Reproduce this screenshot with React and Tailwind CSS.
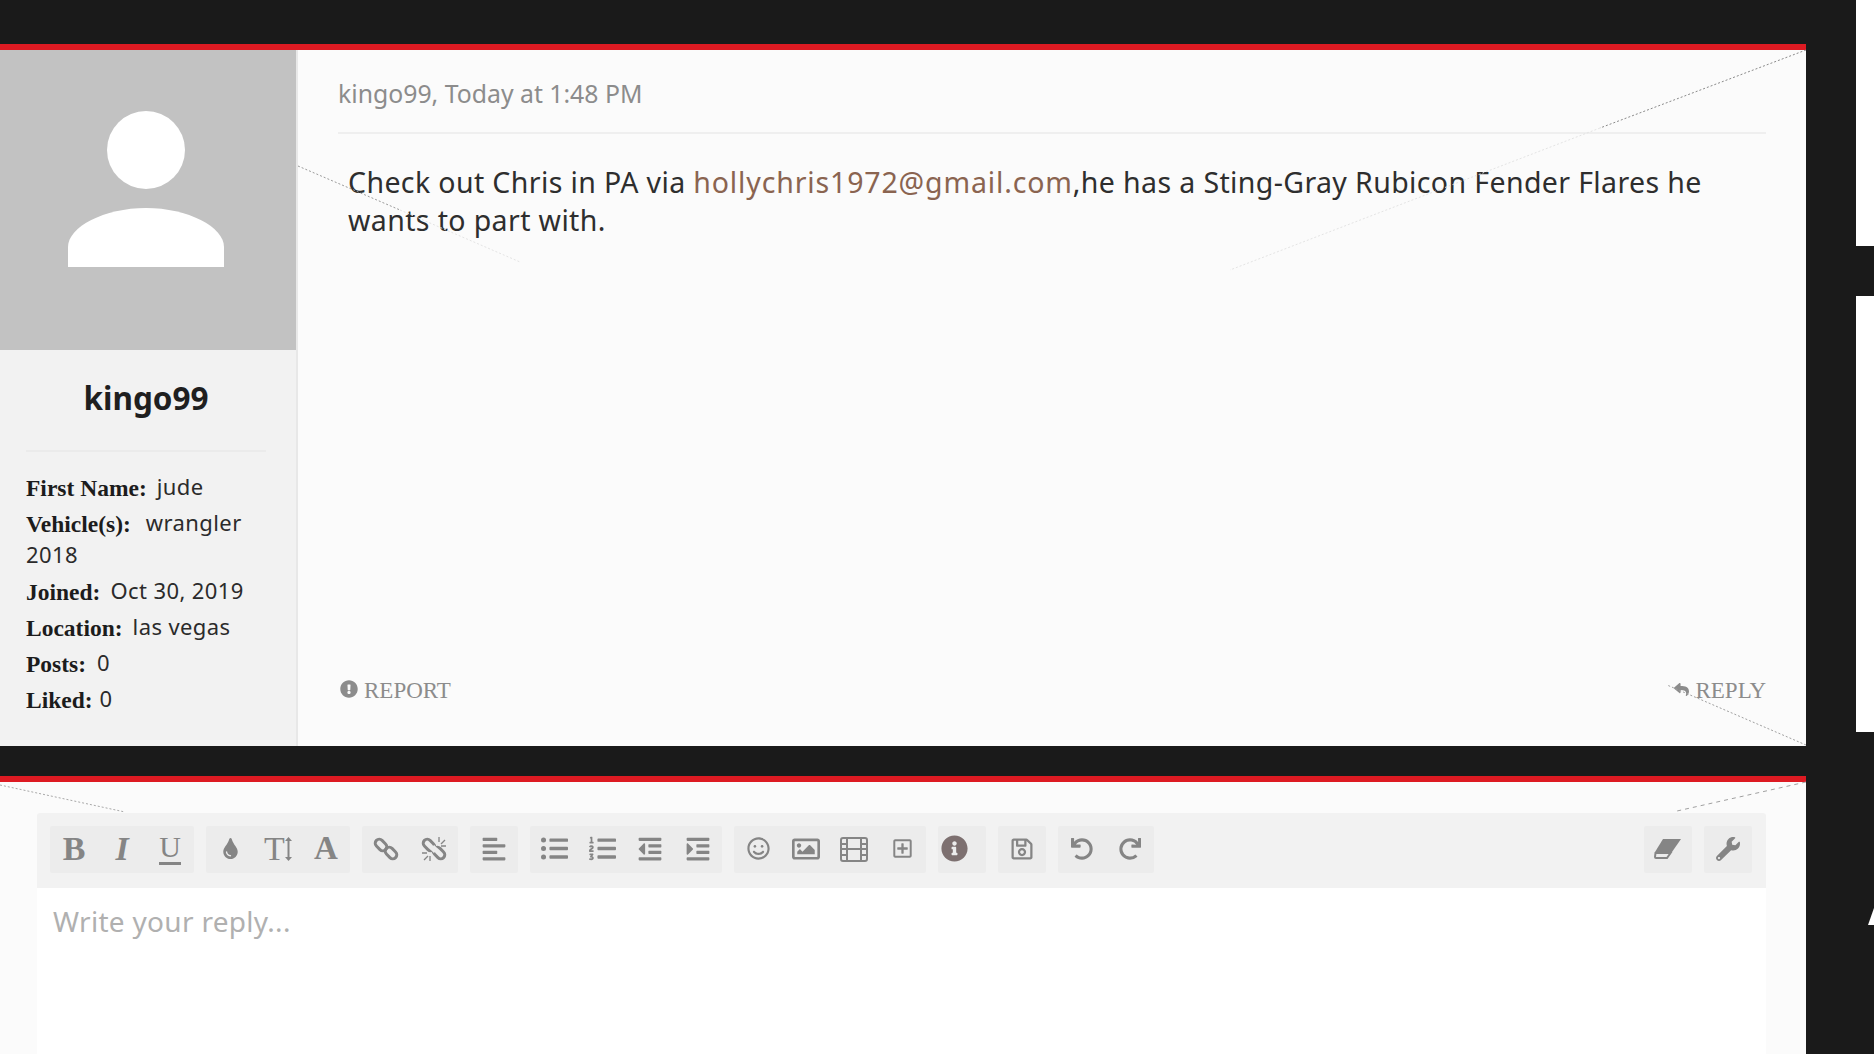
import React from "react";
import { FaTint, FaAlignLeft, FaListUl, FaListOl, FaOutdent, FaIndent, FaRegSmile, FaRegImage, FaRegPlusSquare, FaInfoCircle, FaRegSave, FaUndo, FaRedo, FaWrench, FaReply, FaExclamationCircle } from "react-icons/fa";

const sans = "font-['Noto_Sans','Open_Sans',sans-serif]";
const slab = "font-['Liberation_Serif',serif]";

const Row = ({ label, children, gap = "mr-[10px]" }) => (
  <div className="mb-[4px] text-[22px] leading-[32px] text-[#2b2b2b] tracking-[0.4px]">
    <span className={`${slab} ${gap} align-[-1px] text-[23.5px] leading-none font-bold text-[#1c1c1c] tracking-normal`}>{label}</span>
    {children}
  </div>
);

const Btn = ({ children, className = "" }) => (
  <div className={`flex h-[47px] w-[48px] items-center justify-center pb-[2px] text-[#858585] ${className}`}>{children}</div>
);
const Group = ({ children }) => <div className="flex rounded-[2px] bg-[#ececec]">{children}</div>;
const Glyph = ({ children, className = "" }) => (
  <span className={`${slab} text-[#858585] leading-none ${className}`}>{children}</span>
);

const LinkIcon = ({ broken }) => (
  <svg width="26" height="26" viewBox="0 0 26 26" fill="none" stroke="#858585" strokeWidth="3">
    <rect x="1.500" y="5" width="13" height="8" rx="4" transform="rotate(45 8 9)" />
    <rect x="11.500" y="13" width="13" height="8" rx="4" transform="rotate(45 18 17)" />
    {broken && <path d="M11 11l4 4" stroke="#ececec" strokeWidth="6" />}
    {broken && <path d="M18 1v5M24 4l-4 4M25 10h-5M1 17h5M3 24l4-4M9 20v5" strokeWidth="1.3" />}
  </svg>
);

const Film = () => (
  <svg width="28" height="26" viewBox="0 0 28 26" fill="none" stroke="#858585" strokeWidth="2">
    <rect x="1" y="2" width="26" height="23" rx="2" />
    <path d="M7 2v23M21 2v23M7 13h14M1 8h6M1 13h6M1 19h6M21 8h6M21 13h6M21 19h6" />
  </svg>
);

const Eraser = () => (
  <svg width="28" height="22" viewBox="0 0 28 22">
    <path d="M9 1h18L18 14H1z" fill="#858585" />
    <path d="M1.500 15h15l-3.500 5H2a1 1 0 0 1-1-1z" fill="none" stroke="#858585" strokeWidth="2" />
  </svg>
);

export default function App() {
  return (
    <div className="flex h-[1054px] w-[1874px] overflow-hidden bg-[#1a1a1a]">
      <div className="relative flex w-[1806px] flex-col pt-[44px]">
        {/* post */}
        <div className="flex h-[702px] shrink-0 border-t-[6px] border-[#dd1a22] bg-[#fbfbfb]">
          <aside className="flex w-[298px] shrink-0 flex-col border-r-2 border-[#e8e8e8] bg-[#f2f2f2]">
            <div className="flex h-[300px] items-start bg-[#c2c2c2]">
              <svg width="296" height="300" viewBox="0 0 296 300">
                <ellipse cx="146" cy="100" rx="39" ry="39" fill="#fff" />
                <path d="M68 217v-20c0-20 36-39 78-39s78 19 78 39v20z" fill="#fff" />
              </svg>
            </div>
            <div className={`${sans} pl-[26px] pr-[30px]`}>
              <div className="mt-[24px] border-b-2 border-[#ebebeb] pb-[28px] text-center text-[31.500px] leading-[48px] font-bold text-[#1f1f1f]">kingo99</div>
              <div className="pt-[18px]">
                <Row label="First Name:">jude</Row>
                <Row label="Vehicle(s):" gap="mr-[15px]">wrangler 2018</Row>
                <Row label="Joined:">Oct 30, 2019</Row>
                <Row label="Location:">las vegas</Row>
                <Row label="Posts:" gap="mr-[11px]">0</Row>
                <Row label="Liked:" gap="mr-[7px]">0</Row>
              </div>
            </div>
          </aside>
          <main className="flex flex-1 flex-col px-[40px]">
            <div className={`${sans} h-[84px] border-b-2 border-[#efefef] pt-[24px] text-[24.800px] leading-[38px] text-[#8c8c8c]`}>kingo99, Today at 1:48 PM</div>
            <div className={`${sans} mt-[29px] flex-1 pl-[10px] text-[28.500px] leading-[38px] tracking-[0.38px] text-[#2e2e2e]`}>
              Check out Chris in PA via <span className="tracking-[0.85px] text-[#8a6450]">hollychris1972@gmail.com</span>,he has a Sting-Gray Rubicon Fender Flares he wants to part with.
            </div>
            <div className={`${slab} mb-[40px] flex items-center justify-between text-[23px] leading-[30px] text-[#8c8c8c]`}>
              <div className="flex items-center gap-[6px]"><FaExclamationCircle size={18} color="#8c8c8c" className="-mt-[4px] ml-[2px]" />REPORT</div>
              <div className="flex items-center gap-[6px]"><FaReply size={15} color="#8c8c8c" className="-mt-[4px]" />REPLY</div>
            </div>
          </main>
        </div>

        {/* reply */}
        <div className="mt-[30px] flex-1 border-t-[6px] border-[#dd1a22] bg-[#fbfbfb] pl-[37px] pr-[40px] pt-[31px]">
          <div className="flex h-[75px] items-center justify-between rounded-t-[3px] bg-[#f2f2f2] pl-[13px] pr-[14px]">
            <div className="-mt-[2px] flex gap-[12px]">
              <Group>
                <Btn><Glyph className="text-[34px] font-bold">B</Glyph></Btn>
                <Btn><Glyph className="text-[34px] font-bold italic">I</Glyph></Btn>
                <Btn><Glyph className="border-b-[3px] border-[#858585] text-[30px]">U</Glyph></Btn>
              </Group>
              <Group>
                <Btn><FaTint size={21} /></Btn>
                <Btn>
                  <span className="flex items-center"><Glyph className="text-[34px]">T</Glyph>
                    <svg width="7" height="24" viewBox="0 0 7 24" fill="#858585"><path d="M3.500 0L7 4H4.500v16H7l-3.500 4L0 20h2.500V4H0z" /></svg>
                  </span>
                </Btn>
                <Btn><Glyph className="text-[33px] font-bold">A</Glyph></Btn>
              </Group>
              <Group>
                <Btn><LinkIcon /></Btn>
                <Btn><LinkIcon broken /></Btn>
              </Group>
              <Group><Btn><FaAlignLeft size={26} /></Btn></Group>
              <Group>
                <Btn><FaListUl size={27} /></Btn>
                <Btn><FaListOl size={27} /></Btn>
                <Btn><FaOutdent size={26} /></Btn>
                <Btn><FaIndent size={26} /></Btn>
              </Group>
              <Group>
                <Btn><FaRegSmile size={23} /></Btn>
                <Btn><FaRegImage size={28} /></Btn>
                <Btn><Film /></Btn>
                <Btn><FaRegPlusSquare size={21} /></Btn>
              </Group>
              <Group><Btn className="pr-[16px]"><FaInfoCircle size={27} color="#7d7070" /></Btn></Group>
              <Group><Btn><FaRegSave size={24} /></Btn></Group>
              <Group>
                <Btn><FaUndo size={22} /></Btn>
                <Btn><FaRedo size={22} /></Btn>
              </Group>
            </div>
            <div className="-mt-[2px] flex gap-[12px]">
              <Group><Btn><Eraser /></Btn></Group>
              <Group><Btn><FaWrench size={24} /></Btn></Group>
            </div>
          </div>
          <div className={`${sans} h-[200px] bg-white px-[16px] pt-[14px] text-[28px] leading-[38px] tracking-[0.3px] text-[#b0b0b0]`}>Write your reply...</div>
        </div>

        {/* decorative dotted lines lying over the cards */}
        <svg className="pointer-events-none absolute left-0 top-0" width="1806" height="1054" fill="none" strokeDasharray="2 2">
          <path d="M1806 50L1600 128" stroke="#8a8a8a" />
          <path d="M1600 128L1230 270" stroke="#e4e4e4" />
          <path d="M1806 745L1667 685" stroke="#a0a0a0" />
          <path d="M298 166L400 210" stroke="#9a9a9a" />
          <path d="M400 210L520 262" stroke="#e4e4e4" />
          <path d="M1806 782L1677 811" stroke="#a0a0a0" strokeDasharray="4 4" />
          <path d="M0 785L125 812" stroke="#a8a8a8" />
        </svg>
      </div>

      <div className="ml-[50px] flex w-[18px] flex-col">
        <div className="h-[246px] bg-white" />
        <div className="mt-[50px] h-[436px] bg-white" />
        <svg className="ml-[12px] mt-[176px]" width="6" height="17" viewBox="0 0 6 17"><path d="M0 17L6 0v17z" fill="#fff" /></svg>
      </div>
    </div>
  );
}
